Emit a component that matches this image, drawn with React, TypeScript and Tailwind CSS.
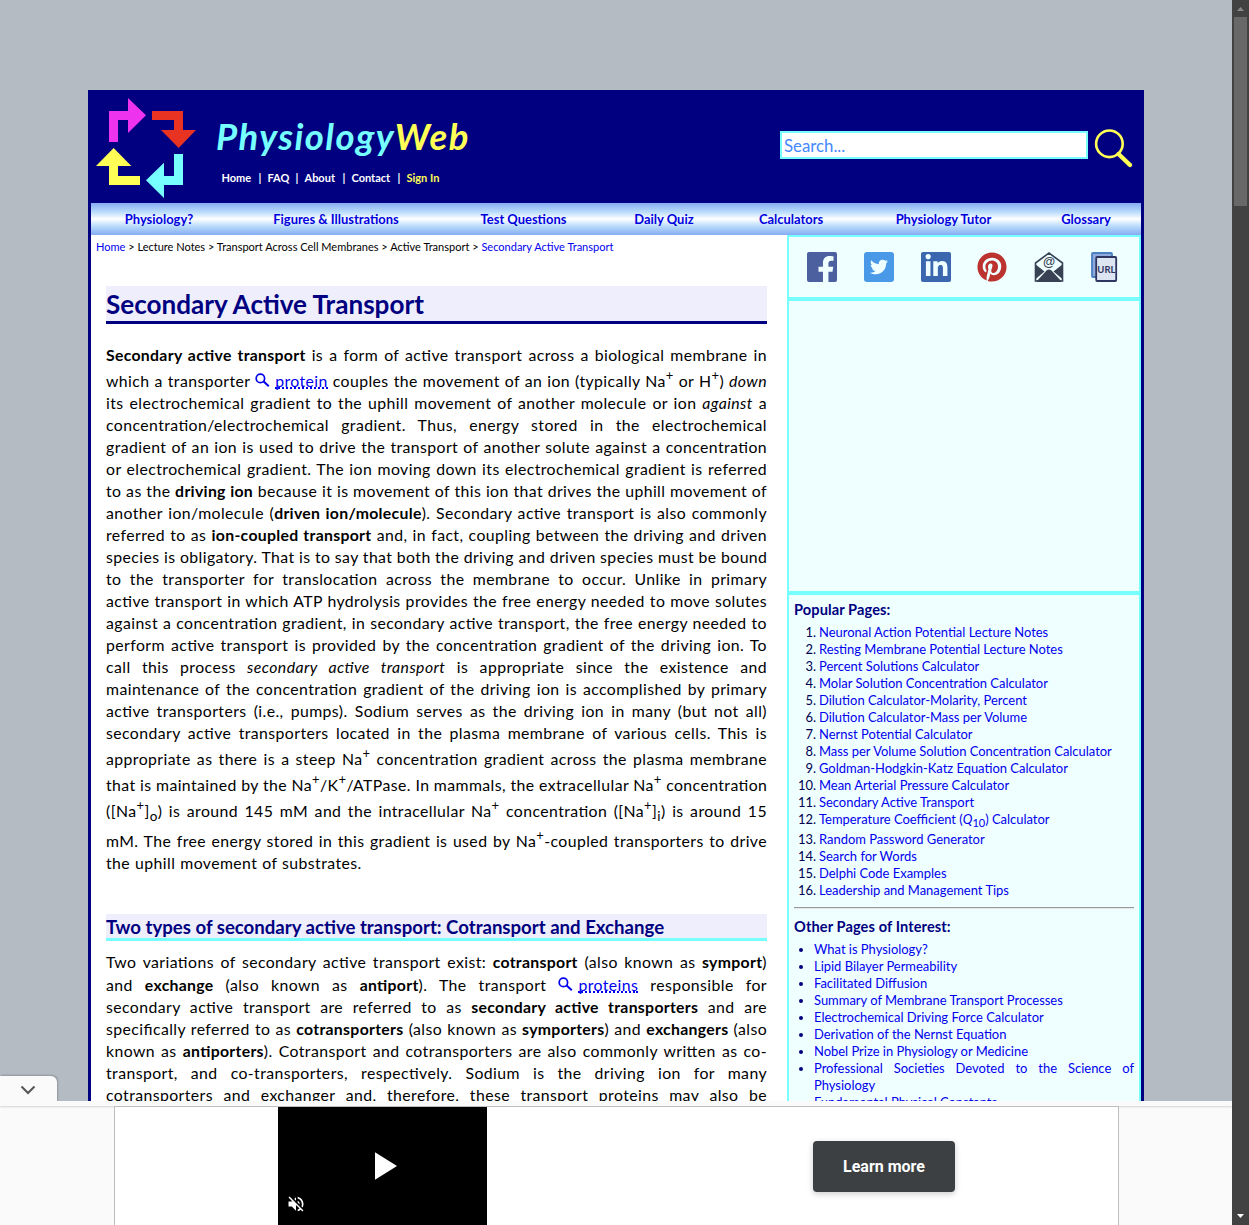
import React from "react";
import { FaTwitter, FaFacebookF, FaLinkedinIn, FaPinterest } from "react-icons/fa";
import { MdVolumeOff } from "react-icons/md";

const Sup = ({ children }: { children: React.ReactNode }) => (
  <sup className="relative -top-[7px] text-[13px] leading-[0] align-baseline">{children}</sup>
);
const Sub = ({ children }: { children: React.ReactNode }) => (
  <sub className="relative top-[4px] text-[13.5px] leading-[0] align-baseline">{children}</sub>
);

const Line = ({ children, className = "" }: { children: React.ReactNode; className?: string }) => (
  <div className={`h-[22px] whitespace-nowrap leading-[22px] [text-align-last:justify] ${className}`}>{children}</div>
);

const B = ({ children }: { children: React.ReactNode }) => <b className="leading-[0] tracking-[0.31px]">{children}</b>;

const Term = ({ children }: { children: string }) => (
  <>
    <svg className="relative top-[1px] mr-[5px] inline-block align-baseline" width="15" height="15" viewBox="0 0 15 15" fill="none" stroke="#0000ee">
      <circle cx="5.4" cy="5.4" r="4.2" strokeWidth="1.7" />
      <path d="M8.6 8.6 L13.8 13.2" strokeWidth="2" />
    </svg>
    <span className="inline-block h-[18px] border-b-2 border-dotted border-[#0000ee] leading-[19px] text-[#0000ee]">{children}</span>
  </>
);

const navItems = [
  { t: "Physiology?", w: "w-[136px]" },
  { t: "Figures & Illustrations", w: "w-[218px]" },
  { t: "Test Questions", w: "w-[157px]" },
  { t: "Daily Quiz", w: "w-[124px]" },
  { t: "Calculators", w: "w-[130px]" },
  { t: "Physiology Tutor", w: "w-[175px]" },
  { t: "Glossary", w: "w-[110px]" },
];

const popular: React.ReactNode[] = [
  "Neuronal Action Potential Lecture Notes",
  "Resting Membrane Potential Lecture Notes",
  "Percent Solutions Calculator",
  "Molar Solution Concentration Calculator",
  "Dilution Calculator-Molarity, Percent",
  "Dilution Calculator-Mass per Volume",
  "Nernst Potential Calculator",
  "Mass per Volume Solution Concentration Calculator",
  "Goldman-Hodgkin-Katz Equation Calculator",
  "Mean Arterial Pressure Calculator",
  "Secondary Active Transport",
  <>Temperature Coefficient (<i>Q</i><sub className="relative top-[3px] text-[11px] leading-[0] align-baseline">10</sub>) Calculator</>,
  "Random Password Generator",
  "Search for Words",
  "Delphi Code Examples",
  "Leadership and Management Tips",
];

const others = [
  "What is Physiology?",
  "Lipid Bilayer Permeability",
  "Facilitated Diffusion",
  "Summary of Membrane Transport Processes",
  "Electrochemical Driving Force Calculator",
  "Derivation of the Nernst Equation",
  "Nobel Prize in Physiology or Medicine",
];

const Logo = () => (
  <svg className="ml-[2px] shrink-0" width="120" height="113" viewBox="0 0 360 339">
    <path fill="#ee33ee" d="M57 156V63H114V24L168 76L114 129V90H84V156Z" />
    <path fill="#e83322" d="M186 63H279V120H318L266 174L213 120H252V90H186Z" />
    <path fill="#77ffff" d="M279 192V285H222V324L168 271L222 218V258H252V192Z" />
    <path fill="#ffff55" d="M150 285H57V228H18L71 174L124 228H84V258H150Z" />
  </svg>
);

const Header = () => (
  <header className="flex h-[113px] bg-[#000080]">
    <Logo />
    <div className="ml-[6px] w-[400px] whitespace-nowrap pt-[23px]">
      <div className="h-[46px] text-[36.5px] font-bold italic leading-[46px] tracking-[1.45px] text-[#77ffff]">
        Physiology<span className="text-[#ffff55]">Web</span>
      </div>
      <div className="mt-[11px] flex pl-[5.5px] text-[11px] font-bold leading-[16px] text-white">
        <span className="w-[37px]">Home</span>
        <span className="w-[9px]">|</span>
        <span className="w-[28px]">FAQ</span>
        <span className="w-[9px]">|</span>
        <span className="w-[38px]">About</span>
        <span className="w-[9px]">|</span>
        <span className="w-[46px]">Contact</span>
        <span className="w-[9px]">|</span>
        <span className="text-[#ffff55]">Sign In</span>
      </div>
    </div>
    <div className="ml-auto flex pr-[10px] pt-[37px]">
      <div className="mt-[4px] h-[28px] w-[308px] border-2 border-[#77ffff] bg-white pl-[2px] text-[16.8px] leading-[25px] text-[#4488ff]">Search...</div>
      <svg className="ml-[5px]" width="41" height="43" viewBox="0 0 41 43" fill="none" stroke="#ffff55">
        <circle cx="16.4" cy="16.8" r="13.3" strokeWidth="2.6" />
        <path d="M25.5 27 L37 38" strokeWidth="4.4" strokeLinecap="round" />
      </svg>
    </div>
  </header>
);

const Social = () => (
  <div className="flex h-[64px] border-2 border-[#77ffff] bg-[#efffff] pl-[18px] pt-[15px]">
    <div className="mr-[27px] flex h-[30px] w-[30px] items-end justify-end overflow-hidden rounded-[2px] bg-[#4c5f9e]">
      <FaFacebookF className="-mb-[2px] mr-[1px] h-[28px] w-[20px] text-[#efffff]" />
    </div>
    <div className="mr-[27px] flex h-[30px] w-[30px] items-center justify-center rounded-[3px] bg-[#4999e8]">
      <FaTwitter size={18} className="mr-[1px] text-[#efffff]" />
    </div>
    <div className="mr-[26px] flex h-[30px] w-[30px] items-center justify-center rounded-[2px] bg-[#3a67ae]">
      <FaLinkedinIn size={25} className="-mt-[1px] text-[#efffff]" />
    </div>
    <FaPinterest size={30} className="mr-[27px] text-[#bb322e]" />
    <svg className="mr-[27px]" width="30" height="30" viewBox="0 0 30 30">
      <path d="M1.5 11 L15 1 L28.5 11 V29 H1.5Z" fill="#efffff" stroke="#384254" strokeWidth="1.6" />
      <path d="M1 12 L10.5 19.5 L1 27.5Z M29 12 L19.5 19.5 L29 27.5Z M2 30 L12.5 18.5 Q15 16.5 17.5 18.5 L28 30Z" fill="#384254" />
      <text x="15" y="14" textAnchor="middle" fontSize="12.5" fontWeight="700" fontFamily="Liberation Sans, sans-serif" fill="#384254">@</text>
    </svg>
    <svg width="28" height="30" viewBox="0 0 28 30">
      <rect x="1" y="1" width="20" height="24" rx="1" fill="#8fa9dc" stroke="#4a7fc0" strokeWidth="1.8" />
      <rect x="5.2" y="5" width="20" height="24" rx="1" fill="#dde4f2" stroke="#2d3560" strokeWidth="1.8" />
      <text x="15.4" y="21" textAnchor="middle" fontSize="9.5" fontWeight="700" fontFamily="Lato, sans-serif" fill="#2d3560">URL</text>
    </svg>
  </div>
);

const Sidebar = () => (
  <aside className="w-[354px] shrink-0">
    <Social />
    <div className="h-[294px] border-2 border-[#77ffff] bg-[#efffff]" />
    <div className="h-[600px] border-2 border-[#77ffff] bg-[#efffff] px-[5px] pt-[5px] text-[12.95px] leading-[17px] text-[#000080]">
      <h3 className="h-[20px] text-[14.6px] font-bold leading-[19px] tracking-[0.1px]">Popular Pages:</h3>
      <ol className="mt-[4px]">
        {popular.map((p, i) => (
          <li key={i} className={`flex whitespace-nowrap ${i === 11 ? "h-[20px]" : "h-[17px]"}`}>
            <span className="w-[22px] text-right text-[#000050]">{i + 1}.</span>
            <a className="ml-[3px] text-[#0000ee]">{p}</a>
          </li>
        ))}
      </ol>
      <hr className="mt-[8px] h-[2px] border-t border-b border-[#9a9a9a] border-b-[#e0e8e8]" />
      <h3 className="mt-[8px] h-[20px] text-[14.6px] font-bold leading-[19px] tracking-[0.1px]">Other Pages of Interest:</h3>
      <ul className="mt-[4px]">
        {others.map((p) => (
          <li key={p} className="flex h-[17px] items-center whitespace-nowrap">
            <span className="ml-[5px] mr-[11px] h-[4px] w-[4px] rounded-full bg-[#000080]" />
            <a className="text-[#0000ee]">{p}</a>
          </li>
        ))}
        <li className="flex h-[34px]">
          <span className="ml-[5px] mr-[11px] mt-[7px] h-[4px] w-[4px] shrink-0 rounded-full bg-[#000080]" />
          <a className="flex-1 text-justify text-[#0000ee]">Professional Societies Devoted to the Science of Physiology</a>
        </li>
        <li className="flex h-[17px] items-center whitespace-nowrap">
          <span className="ml-[5px] mr-[11px] h-[4px] w-[4px] rounded-full bg-[#000080]" />
          <a className="text-[#0000ee]">Fundamental Physical Constants</a>
        </li>
      </ul>
    </div>
  </aside>
);

const Article = () => (
  <main className="w-[696px] shrink-0">
    <div className="h-[24px] whitespace-nowrap pl-[5px] text-[11.02px] leading-[24px] text-black">
      <a className="text-[#0000ee]">Home</a> &gt; Lecture Notes &gt; Transport Across Cell Membranes &gt; Active Transport &gt; <a className="text-[#0000ee]">Secondary Active Transport</a>
    </div>
    <div className="mt-[27px] pl-[15px] pr-[20px]">
      <h1 className="h-[38px] whitespace-nowrap border-b-[3px] border-[#000080] bg-[#eeeefc] text-[26.1px] font-bold leading-[36px] text-[#000080]">Secondary Active Transport</h1>
      <div className="mt-[20px] text-[15.8px] tracking-[0.42px] text-black [font-feature-settings:'liga'_1]">
        <Line><B>Secondary active transport</B> is a form of active transport across a biological membrane in</Line>
        <Line className="mt-[4px]">which a transporter <Term>protein</Term> couples the movement of an ion (typically Na<Sup>+</Sup> or H<Sup>+</Sup>) <i>down</i></Line>
        <Line>its electrochemical gradient to the uphill movement of another molecule or ion <i>against</i> a</Line>
        <Line>concentration/electrochemical gradient. Thus, energy stored in the electrochemical</Line>
        <Line>gradient of an ion is used to drive the transport of another solute against a concentration</Line>
        <Line>or electrochemical gradient. The ion moving down its electrochemical gradient is referred</Line>
        <Line>to as the <B>driving ion</B> because it is movement of this ion that drives the uphill movement of</Line>
        <Line>another ion/molecule (<B>driven ion/molecule</B>). Secondary active transport is also commonly</Line>
        <Line>referred to as <B>ion-coupled transport</B> and, in fact, coupling between the driving and driven</Line>
        <Line>species is obligatory. That is to say that both the driving and driven species must be bound</Line>
        <Line>to the transporter for translocation across the membrane to occur. Unlike in primary</Line>
        <Line>active transport in which ATP hydrolysis provides the free energy needed to move solutes</Line>
        <Line>against a concentration gradient, in secondary active transport, the free energy needed to</Line>
        <Line>perform active transport is provided by the concentration gradient of the driving ion. To</Line>
        <Line>call this process <i>secondary active transport</i> is appropriate since the existence and</Line>
        <Line>maintenance of the concentration gradient of the driving ion is accomplished by primary</Line>
        <Line>active transporters (i.e., pumps). Sodium serves as the driving ion in many (but not all)</Line>
        <Line>secondary active transporters located in the plasma membrane of various cells. This is</Line>
        <Line className="mt-[4px]">appropriate as there is a steep Na<Sup>+</Sup> concentration gradient across the plasma membrane</Line>
        <Line className="mt-[4px]">that is maintained by the Na<Sup>+</Sup>/K<Sup>+</Sup>/ATPase. In mammals, the extracellular Na<Sup>+</Sup> concentration</Line>
        <Line className="mt-[4px]">([Na<Sup>+</Sup>]<Sub>o</Sub>) is around 145 mM and the intracellular Na<Sup>+</Sup> concentration ([Na<Sup>+</Sup>]<Sub>i</Sub>) is around 15</Line>
        <Line className="mt-[8px]">mM. The free energy stored in this gradient is used by Na<Sup>+</Sup>-coupled transporters to drive</Line>
        <div className="h-[22px] leading-[22px] [word-spacing:0.5px]">the uphill movement of substrates.</div>
      </div>
      <h2 className="mt-[40px] h-[27px] whitespace-nowrap border-b-[3px] border-[#77ffff] bg-[#eeeefc] text-[18.6px] font-bold leading-[26px] text-[#000080]">Two types of secondary active transport: Cotransport and Exchange</h2>
      <div className="mt-[10px] text-[15.8px] tracking-[0.42px] text-black [font-feature-settings:'liga'_1]">
        <Line>Two variations of secondary active transport exist: <B>cotransport</B> (also known as <B>symport</B>)</Line>
        <Line className="mt-[1px]">and <B>exchange</B> (also known as <B>antiport</B>). The transport <Term>proteins</Term> responsible for</Line>
        <Line>secondary active transport are referred to as <B>secondary active transporters</B> and are</Line>
        <Line>specifically referred to as <B>cotransporters</B> (also known as <B>symporters</B>) and <B>exchangers</B> (also</Line>
        <Line>known as <B>antiporters</B>). Cotransport and cotransporters are also commonly written as co-</Line>
        <Line>transport, and co-transporters, respectively. Sodium is the driving ion for many</Line>
        <Line>cotransporters and exchanger and, therefore, these transport proteins may also be</Line>
      </div>
    </div>
  </main>
);

const AdBar = () => (
  <footer className="relative h-[124px] bg-[#fafafa]">
    <div className="absolute -top-[25px] left-0 flex h-[26px] w-[57px] items-center justify-center rounded-tr-[6px] bg-[#fafafa] pr-[2px] pt-[2px] shadow-[1px_-1px_2px_rgba(0,0,0,0.2)]">
      <svg width="16" height="10" viewBox="0 0 16 10" fill="none" stroke="#555" strokeWidth="2"><path d="M1.5 1.5 L8 8 L14.5 1.5" /></svg>
    </div>
    <div className="relative h-[5px] bg-[#fafafa] shadow-[0_1px_2px_rgba(0,0,0,0.15)]" />
    <div className="relative ml-[114px] flex h-[119px] w-[1005px] border border-b-0 border-[#bdbdbd] bg-white">
      <div className="relative ml-[163px] h-full w-[209px] bg-black">
        <svg className="absolute left-[97px] top-[45px]" width="22" height="28" viewBox="0 0 23 29"><path d="M0 0L23 14.5L0 29Z" fill="#fff" /></svg>
        <MdVolumeOff size={20} className="absolute left-[8px] top-[87px] text-white" />
      </div>
      <div className="ml-[326px] mt-[34px] flex h-[51px] w-[142px] items-center justify-center rounded-[4px] bg-[#3c4043] font-[Roboto] text-[16px] font-bold text-white shadow-[0_2px_6px_rgba(0,0,0,0.2)]">Learn more</div>
    </div>
  </footer>
);

export default function App() {
  return (
    <div className="flex h-[1225px] w-[1249px] overflow-hidden bg-[#b4bbc3] font-[Lato,sans-serif]">
      <div className="w-[1232px] shrink-0">
        <div className="h-[1101px] overflow-hidden pt-[90px]">
          <div className="ml-[88px] w-[1056px] bg-[#000080]">
            <Header />
            <div className="mx-[3px]">
              <nav className="flex h-[32px] bg-[linear-gradient(to_bottom,#85acf3_0%,#b9dcfb_28%,#ffffff_50%,#b9dcfb_72%,#85acf3_100%)] text-[12.95px] font-bold leading-[33px] text-[#0000dd]">
                {navItems.map((n) => (
                  <a key={n.t} className={`whitespace-nowrap text-center ${n.w}`}>{n.t}</a>
                ))}
              </nav>
              <div className="flex h-[900px] bg-white">
                <Article />
                <Sidebar />
              </div>
            </div>
          </div>
        </div>
        <AdBar />
      </div>
      <div className="flex w-[17px] shrink-0 flex-col items-center bg-[#424242]">
        <svg className="mt-[7px]" width="7" height="4" viewBox="0 0 7 4"><path d="M0 4L3.5 0L7 4Z" fill="#8a8a8a" /></svg>
        <div className="mt-[6px] h-[189px] w-[13px] bg-[#686868]" />
        <svg className="mb-[7px] mt-auto" width="7" height="4" viewBox="0 0 7 4"><path d="M0 0L3.5 4L7 0Z" fill="#fff" /></svg>
      </div>
    </div>
  );
}
